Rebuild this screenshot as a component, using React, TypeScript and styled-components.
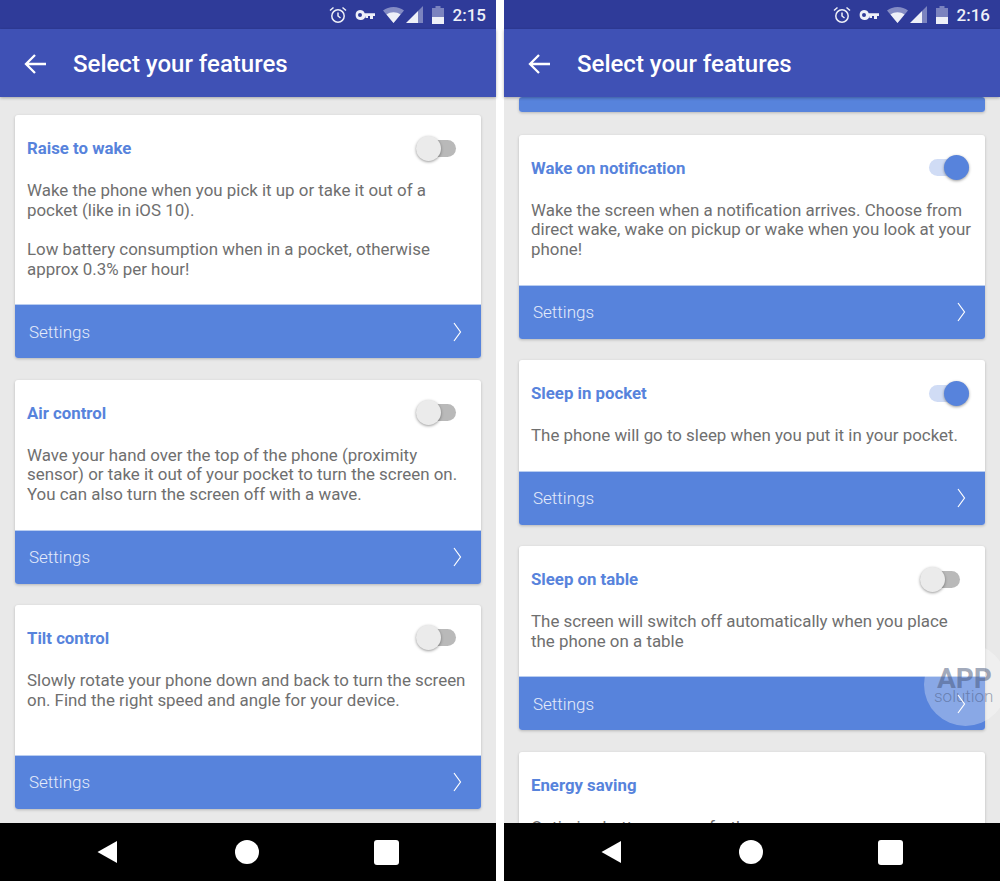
import React from "react";
import styled, { createGlobalStyle } from "styled-components";

const GlobalStyle = createGlobalStyle`
    html, body {
        margin: 0;
        padding: 0;
        background: #fff;
        font-family: Roboto, "Liberation Sans", sans-serif;
    }
`;

const Page = styled.div`
    position: relative;
    display: flex;
    justify-content: space-between;
    width: 1000px;
    height: 881px;
    overflow: hidden;
`;

const Phone = styled.div`
    display: flex;
    flex-direction: column;
    width: 496px;
    height: 881px;
    background: #e9e9e9;
`;

const StatusBar = styled.div`
    display: flex;
    align-items: center;
    justify-content: flex-end;
    height: 29px;
    padding-right: 10px;
    background: #2f3b99;
    color: #eef0f8;
    font-size: 17px;
    font-weight: 500;
    flex-shrink: 0;
`;

const StatusIcon = styled.svg<{ $gap: number }>`
    display: block;
    margin-right: ${(p) => p.$gap}px;
`;

const AppBar = styled.div`
    position: relative;
    z-index: 2;
    display: flex;
    align-items: center;
    gap: 26px;
    height: 68px;
    padding: 2px 0 0 23px;
    box-sizing: border-box;
    background: #3f51b5;
    box-shadow: 0 1px 3px rgba(0, 0, 0, 0.3);
    flex-shrink: 0;
`;

const Title = styled.div`
    color: #fff;
    font-size: 24px;
    font-weight: 500;
`;

const Content = styled.div<{ $top: number }>`
    flex: 1;
    overflow: hidden;
    display: flex;
    flex-direction: column;
    gap: 21.4px;
    padding: ${(p) => p.$top}px 15px 0;
`;

const Card = styled.div<{ $stub?: boolean }>`
    flex-shrink: 0;
    background: #fff;
    border-radius: 3px;
    overflow: hidden;
    box-shadow: 0 1px 3px rgba(0, 0, 0, 0.22);
    margin-bottom: ${(p) => (p.$stub ? "1.5px" : "0")};
`;

const CardBody = styled.div`
    padding: 0 12px 15px;
`;

const CardHead = styled.div`
    display: flex;
    align-items: center;
    justify-content: space-between;
    height: 66px;
`;

const CardTitle = styled.div`
    color: #5783dc;
    font-size: 16.8px;
    font-weight: 700;
`;

const Description = styled.div`
    color: #6f6f6f;
    font-size: 16.9px;
    line-height: 19.6px;
    white-space: pre-line;
    padding-bottom: 10px;
`;

const Toggle = styled.div<{ $on: boolean }>`
    position: relative;
    width: 40px;
    height: 17px;
    margin-right: ${(p) => (p.$on ? "4px" : "13px")};
    border-radius: 9px;
    background: ${(p) => (p.$on ? "#d0dcf5" : "#b9b9b9")};
`;

const Knob = styled.div<{ $on: boolean }>`
    position: absolute;
    top: -4px;
    left: ${(p) => (p.$on ? "15px" : "0")};
    width: 25px;
    height: 25px;
    border-radius: 50%;
    background: ${(p) => (p.$on ? "#5783dc" : "#ebebeb")};
    box-shadow: 0 1px 3px rgba(0, 0, 0, 0.4);
`;

const SettingsBar = styled.div<{ $stub?: boolean }>`
    display: flex;
    align-items: center;
    justify-content: space-between;
    height: ${(p) => (p.$stub ? "15px" : "54px")};
    padding: 0 19px 0 14px;
    background: #5783dc;
    border-top: ${(p) => (p.$stub ? "none" : "1px solid #b9cdf0")};
    box-sizing: border-box;
    color: #e4ebfa;
    font-size: 17px;
    font-weight: 300;
`;

const ChevronIcon = styled.svg`
    position: relative;
    z-index: 4;
    display: block;
`;

const NavBar = styled.div`
    position: relative;
    z-index: 2;
    display: flex;
    align-items: center;
    height: 58px;
    background: #000;
    flex-shrink: 0;
    padding-left: 97px;
`;

const NavIcon = styled.svg<{ $gap: number }>`
    display: block;
    margin-right: ${(p) => p.$gap}px;
`;

const Watermark = styled.div`
    position: absolute;
    left: 924px;
    top: 643px;
    width: 83px;
    height: 83px;
    border-radius: 50%;
    background: rgba(255, 255, 255, 0.3);
    color: rgba(70, 85, 120, 0.5);
    z-index: 3;
`;

const WatermarkApp = styled.div`
    position: absolute;
    left: 13px;
    top: 21px;
    font-size: 28px;
    line-height: 30px;
    font-weight: 700;
`;

const WatermarkSolution = styled.div`
    position: absolute;
    left: 10px;
    top: 43px;
    font-size: 17px;
    line-height: 20px;
    font-weight: 300;
`;

const Back = () => (
    <svg width="24" height="24" viewBox="0 0 24 24" fill="none" stroke="#fff" strokeWidth="2.3">
        <path d="M23 12H3M12 3l-9 9 9 9" />
    </svg>
);

const Chevron = () => (
    <ChevronIcon width="9" height="20" viewBox="0 0 9 20" fill="none" stroke="#fff" strokeWidth="1.2">
        <path d="M1 1l6.5 9L1 19" />
    </ChevronIcon>
);

const StatusIcons = ({ time }: { time: string }) => (
    <StatusBar>
        <StatusIcon $gap={8} width="18" height="18" viewBox="0 0 18 18" fill="none" stroke="#eef0f8" strokeWidth="1.5">
            <circle cx="9" cy="10" r="6.2" />
            <path d="M9 6.5V10l2.5 2M1 4.5L4.5 1.5M17 4.5L13.500 1.500" />
        </StatusIcon>
        <StatusIcon $gap={8} width="20" height="12" viewBox="0 0 20 12" fill="#eef0f8">
            <path fillRule="evenodd" d="M5 1a5 5 0 0 1 4.700 3.300H20V7h-2v3h-3V7h-2v2h-2.500V7A5 5 0 1 1 5 1zm0 3a2 2 0 1 0 0 4 2 2 0 0 0 0-4z" />
        </StatusIcon>
        <StatusIcon $gap={2} width="21" height="16" viewBox="0 0 21 16" fill="#eef0f8">
            <path opacity="0.45" d="M10.500 0C6.500 0 3 1.300 0 3.500L10.500 16 21 3.500C18 1.300 14.500 0 10.500 0z" />
            <path d="M10.500 16L3.500 7.500C5.500 6 8 5.200 10.500 5.200S15.500 6 17.500 7.500z" />
        </StatusIcon>
        <StatusIcon $gap={9} width="17" height="17" viewBox="0 0 17 17" fill="#eef0f8">
            <path opacity="0.4" d="M17 0v17H12V5z" />
            <path d="M12 5v12H0z" />
        </StatusIcon>
        <StatusIcon $gap={9} width="12" height="18" viewBox="0 0 12 18" fill="#eef0f8">
            <path opacity="0.4" d="M3.500 0h5v2H12v9H0V2h3.500z" />
            <path d="M0 11h12v7H0z" />
        </StatusIcon>
        {time}
    </StatusBar>
);

const Nav = () => (
    <NavBar>
        <NavIcon $gap={118} width="20" height="22" viewBox="0 0 20 22" fill="#fff">
            <path d="M20 0V22L0.500 11z" />
        </NavIcon>
        <NavIcon $gap={115} width="24" height="24" viewBox="0 0 24 24" fill="#fff">
            <circle cx="12" cy="12" r="12" />
        </NavIcon>
        <NavIcon $gap={0} width="25" height="25" viewBox="0 0 25 25" fill="#fff">
            <rect width="25" height="25" rx="3" />
        </NavIcon>
    </NavBar>
);

type Feature = {
    title: string;
    text: string;
    on: boolean;
    noSettings?: boolean;
};

const leftFeatures: Feature[] = [
    {
        title: "Raise to wake",
        text: "Wake the phone when you pick it up or take it out of a pocket (like in iOS 10).\n\nLow battery consumption when in a pocket, otherwise approx 0.3% per hour!",
        on: false,
    },
    {
        title: "Air control",
        text: "Wave your hand over the top of the phone (proximity sensor) or take it out of your pocket to turn the screen on. You can also turn the screen off with a wave.",
        on: false,
    },
    {
        title: "Tilt control",
        text: "Slowly rotate your phone down and back to turn the screen on. Find the right speed and angle for your device.\n\u00a0",
        on: false,
    },
];

const rightFeatures: Feature[] = [
    {
        title: "Wake on notification",
        text: "Wake the screen when a notification arrives. Choose from direct wake, wake on pickup or wake when you look at your phone!",
        on: true,
    },
    {
        title: "Sleep in pocket",
        text: "The phone will go to sleep when you put it in your pocket.",
        on: true,
    },
    {
        title: "Sleep on table",
        text: "The screen will switch off automatically when you place the phone on a table",
        on: false,
    },
    {
        title: "Energy saving",
        text: "Optimise battery usage further",
        on: false,
        noSettings: true,
    },
];

const FeatureCard = ({ feature }: { feature: Feature }) => (
    <Card>
        <CardBody>
            <CardHead>
                <CardTitle>{feature.title}</CardTitle>
                {!feature.noSettings && (
                    <Toggle $on={feature.on}>
                        <Knob $on={feature.on} />
                    </Toggle>
                )}
            </CardHead>
            <Description>{feature.text}</Description>
        </CardBody>
        {!feature.noSettings && (
            <SettingsBar>
                Settings
                <Chevron />
            </SettingsBar>
        )}
    </Card>
);

const App = () => (
    <Page>
        <GlobalStyle />
        <Phone>
            <StatusIcons time="2:15" />
            <AppBar>
                <Back />
                <Title>Select your features</Title>
            </AppBar>
            <Content $top={18.4}>
                {leftFeatures.map((f) => (
                    <FeatureCard key={f.title} feature={f} />
                ))}
            </Content>
            <Nav />
        </Phone>
        <Phone>
            <StatusIcons time="2:16" />
            <AppBar>
                <Back />
                <Title>Select your features</Title>
            </AppBar>
            <Content $top={0}>
                <Card $stub>
                    <SettingsBar $stub />
                </Card>
                {rightFeatures.map((f) => (
                    <FeatureCard key={f.title} feature={f} />
                ))}
            </Content>
            <Nav />
        </Phone>
        <Watermark>
            <WatermarkApp>APP</WatermarkApp>
            <WatermarkSolution>solution</WatermarkSolution>
        </Watermark>
    </Page>
);

export default App;
